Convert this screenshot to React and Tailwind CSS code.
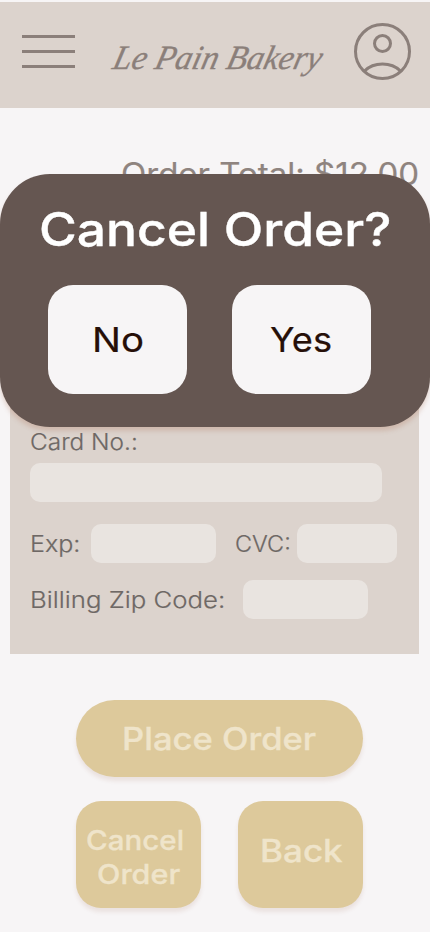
function Label({ className, children }) {
  return <span className={`block w-max origin-left whitespace-nowrap ${className}`}>{children}</span>;
}

function Field({ className }) {
  return <div className={`h-[39px] rounded-[10px] bg-[#e9e4e0] ${className}`} />;
}

function Header() {
  return (
    <header className="mt-[2px] flex h-[106px] shrink-0 bg-[#dcd3cd] text-[#8b7f7a]">
      <button aria-label="Menu" className="mt-[33px] ml-[22px] flex h-[33px] w-[53px] flex-col justify-between">
        <span className="h-[3px] w-full bg-current" />
        <span className="h-[3px] w-full bg-current" />
        <span className="h-[3px] w-full bg-current" />
      </button>
      <div className="mt-[33px] ml-[39px] w-[210px]">
        <Label className="-skew-x-[14deg] scale-x-[0.985] font-['Liberation_Serif',serif] text-[34px] leading-[46px] italic [-webkit-text-stroke:0.3px_currentColor]">Le Pain Bakery</Label>
      </div>
      <svg className="mt-[21px] ml-[30px] size-[57px]" viewBox="0 0 57 57" fill="none" stroke="currentColor" strokeWidth="3">
        <circle cx="28.5" cy="28.5" r="27" />
        <circle cx="28.5" cy="20.5" r="8" />
        <path d="M10.500 48C15 43.500 21.500 41 28.500 41s13.500 2.500 18 7" />
      </svg>
    </header>
  );
}

function CancelDialog() {
  return (
    <div role="dialog" className="absolute top-[174px] left-0 h-[253px] w-[430px] rounded-[50px] bg-[#655651] shadow-[0_4px_4px_rgba(170,110,85,0.25)]">
      <div className="flex h-[111px] pt-[25px] pl-[39px]">
        <Label className="scale-x-[1.12] text-[46px] leading-[60px] font-medium text-white [-webkit-text-stroke:0.4px_currentColor]">Cancel Order?</Label>
      </div>
      <div className="flex gap-[45px] pl-[48px] text-[34px] leading-[109px] font-normal text-[#260f08] [-webkit-text-stroke:0.2px_currentColor]">
        <button className="h-[109px] w-[139px] rounded-[25px] bg-[#f7f5f6] pl-[44px]">
          <Label className="scale-x-[1.13]">No</Label>
        </button>
        <button className="h-[109px] w-[139px] rounded-[25px] bg-[#f7f5f6] pl-[38px]">
          <Label className="scale-x-[1.065]">Yes</Label>
        </button>
      </div>
    </div>
  );
}

export default function App() {
  return (
    <div className="relative flex h-[932px] w-[430px] flex-col overflow-hidden bg-[#f7f5f6] font-[Inter,sans-serif]">
      <Header />
      <div className="mt-[46px] ml-[121px] text-[#8f847f]">
        <Label className="scale-x-[1.065] text-[31px] leading-[40px] font-normal [-webkit-text-stroke:0.2px_currentColor]">Order Total: $12.00</Label>
      </div>
      <section className="mt-[26px] ml-[10px] flex h-[434px] w-[409px] shrink-0 flex-col bg-[#dcd3cd] pt-[207px] pl-[20px] text-[23px] font-light text-[#6e6865] [-webkit-text-stroke:0.2px_currentColor]">
        <Label className="scale-x-[1.06] leading-[30px]">Card No.:</Label>
        <Field className="mt-[6px] w-[352px]" />
        <div className="mt-[22px] flex items-center">
          <div className="w-[61px] pt-[2px]"><Label className="scale-x-[1.09]">Exp:</Label></div>
          <Field className="w-[125px]" />
          <div className="ml-[19px] w-[62px] pt-[2px]"><Label className="scale-x-[1.02]">CVC:</Label></div>
          <Field className="w-[100px]" />
        </div>
        <div className="mt-[17px] flex items-center">
          <div className="w-[213px] pt-[2px]"><Label className="scale-x-[1.12]">Billing Zip Code:</Label></div>
          <Field className="w-[125px]" />
        </div>
      </section>
      <div className="mt-[46px] ml-[76px] w-[287px] font-medium text-[#efe4ca] [-webkit-text-stroke:0.3px_currentColor]">
        <button className="block h-[77px] w-full rounded-[40px] bg-[#ddc99b] pl-[46px] text-[31px] leading-[77px] shadow-[0_4px_4px_rgba(130,60,30,0.1)]">
          <Label className="scale-x-[1.115]">Place Order</Label>
        </button>
        <div className="mt-[24px] flex justify-between">
          <button className="h-[107px] w-[125px] rounded-[25px] bg-[#ddc99b] pt-[7px] pl-[10px] text-[27px] leading-[34px] shadow-[0_4px_4px_rgba(130,60,30,0.1)]">
            <Label className="scale-x-[1.095]">Cancel</Label>
            <Label className="ml-[11px] scale-x-[1.13]">Order</Label>
          </button>
          <button className="h-[107px] w-[125px] rounded-[25px] bg-[#ddc99b] pb-[7px] pl-[22px] text-[31px] leading-[40px] shadow-[0_4px_4px_rgba(130,60,30,0.1)]">
            <Label className="scale-x-[1.13]">Back</Label>
          </button>
        </div>
      </div>
      <CancelDialog />
    </div>
  );
}
